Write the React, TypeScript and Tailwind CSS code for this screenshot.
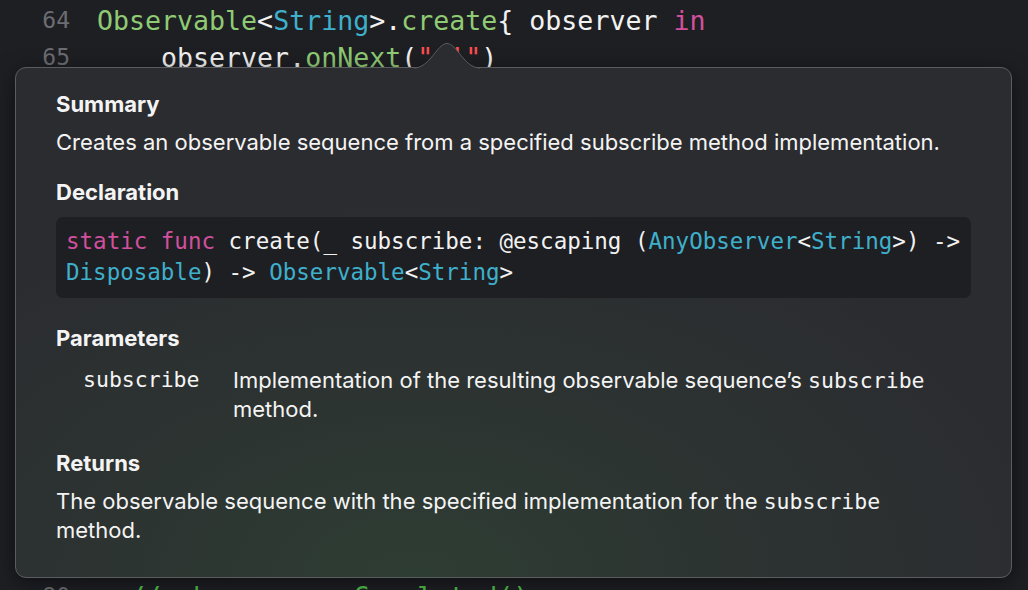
import React from "react";

const mono = { fontFamily: '"DejaVu Sans Mono", "Liberation Mono", monospace' };
const sans = { fontFamily: 'Inter, "Noto Sans", sans-serif' };

const G = "text-[#8fcb74]";
const C = "text-[#3fb0cb]";
const M = "text-[#d1509e]";
const W = "text-[#f2f2f2]";

function Line({ n, children }: { n?: number; children?: React.ReactNode }) {
  return (
    <div className="flex h-[37px] items-center">
      <div className="w-[70px] shrink-0 text-right text-[23px] text-[#6c6d72]" style={mono}>
        {n}
      </div>
      <div className="pl-[27px] whitespace-pre text-[26.6px]" style={mono}>
        {children}
      </div>
    </div>
  );
}

export default function App() {
  return (
    <div className="relative h-[590px] w-[1028px] overflow-hidden bg-[#1e1f23]">
      <div className="pt-[2px]">
        <Line n={64}>
          <span className={G}>Observable</span>
          <span className={W}>&lt;</span>
          <span className={C}>String</span>
          <span className={W}>&gt;.</span>
          <span className={G}>create</span>
          <span className={W}>{"{ observer "}</span>
          <span className={M}>in</span>
        </Line>
        <Line n={65}>
          <span className={W}>{"    observer."}</span>
          <span className={G}>onNext</span>
          <span className={W}>(</span>
          <span className="text-[#ff4f4f]">"@!"</span>
          <span className={W}>)</span>
        </Line>
        <div className="h-[502px]" />
        <Line n={80}>
          <span className="text-[#4fbf4a]">{"  // observer.onCompleted()"}</span>
        </Line>
      </div>

      {/* Quick Help popover */}
      <div
        className="absolute left-[15px] top-[67px] h-[511px] w-[997px] rounded-[11px] border border-[#5b5c60] bg-[radial-gradient(ellipse_65%_75%_at_40%_100%,#2e3d33_0%,#2c3331_50%,#2b2c30_100%)] px-10 pt-[22px] text-[#f4f4f4] shadow-[0_4px_20px_rgba(0,0,0,0.5)]"
        style={sans}
      >
        <div className="text-[22px] font-bold leading-[28px]">Summary</div>
        <div className="mt-[10px] text-[22px] leading-[28px]">
          Creates an observable sequence from a specified subscribe method implementation.
        </div>
        <div className="mt-[22px] text-[22px] font-bold leading-[28px]">Declaration</div>
        <div
          className="mt-[11px] h-[81px] rounded-[7px] bg-[#1e1f23] px-[10px] pt-[9px] text-[22.5px] leading-[31px] whitespace-pre"
          style={mono}
        >
          <div>
            <span className={M}>static func</span>
            <span className={W}>{" create(_ subscribe: @escaping ("}</span>
            <span className={C}>AnyObserver</span>
            <span className={W}>&lt;</span>
            <span className={C}>String</span>
            <span className={W}>{">) ->"}</span>
          </div>
          <div>
            <span className={C}>Disposable</span>
            <span className={W}>{") -> "}</span>
            <span className={C}>Observable</span>
            <span className={W}>&lt;</span>
            <span className={C}>String</span>
            <span className={W}>&gt;</span>
          </div>
        </div>
        <div className="mt-[26px] text-[22px] font-bold leading-[28px]">Parameters</div>
        <div className="mt-[14px] flex text-[22px] leading-[28px]">
          <div className="w-[177px] shrink-0 pl-[27px] text-[21.5px]" style={mono}>
            subscribe
          </div>
          <div>
            Implementation of the resulting observable sequence’s{" "}
            <span className="text-[21.5px]" style={mono}>subscribe</span>
            <br />
            method.
          </div>
        </div>
        <div className="mt-[26px] text-[22px] font-bold leading-[28px]">Returns</div>
        <div className="mt-[10px] text-[22px] leading-[28px]">
          The observable sequence with the specified implementation for the{" "}
          <span className="text-[21.5px]" style={mono}>subscribe</span>
          <br />
          method.
        </div>
      </div>

      {/* arrow bump */}
      <svg
        className="absolute left-[414px] top-[42px]"
        width="66"
        height="27"
        viewBox="0 0 66 27"
      >
        <path d="M0,26 C16,26 23,1.5 33,1.5 C43,1.5 50,26 66,26 L66,27 L0,27 Z" fill="#2b2c30" />
        <path
          d="M0,26 C16,26 23,1.5 33,1.5 C43,1.5 50,26 66,26"
          fill="none"
          stroke="#5b5c60"
          strokeWidth="1"
        />
      </svg>
    </div>
  );
}
